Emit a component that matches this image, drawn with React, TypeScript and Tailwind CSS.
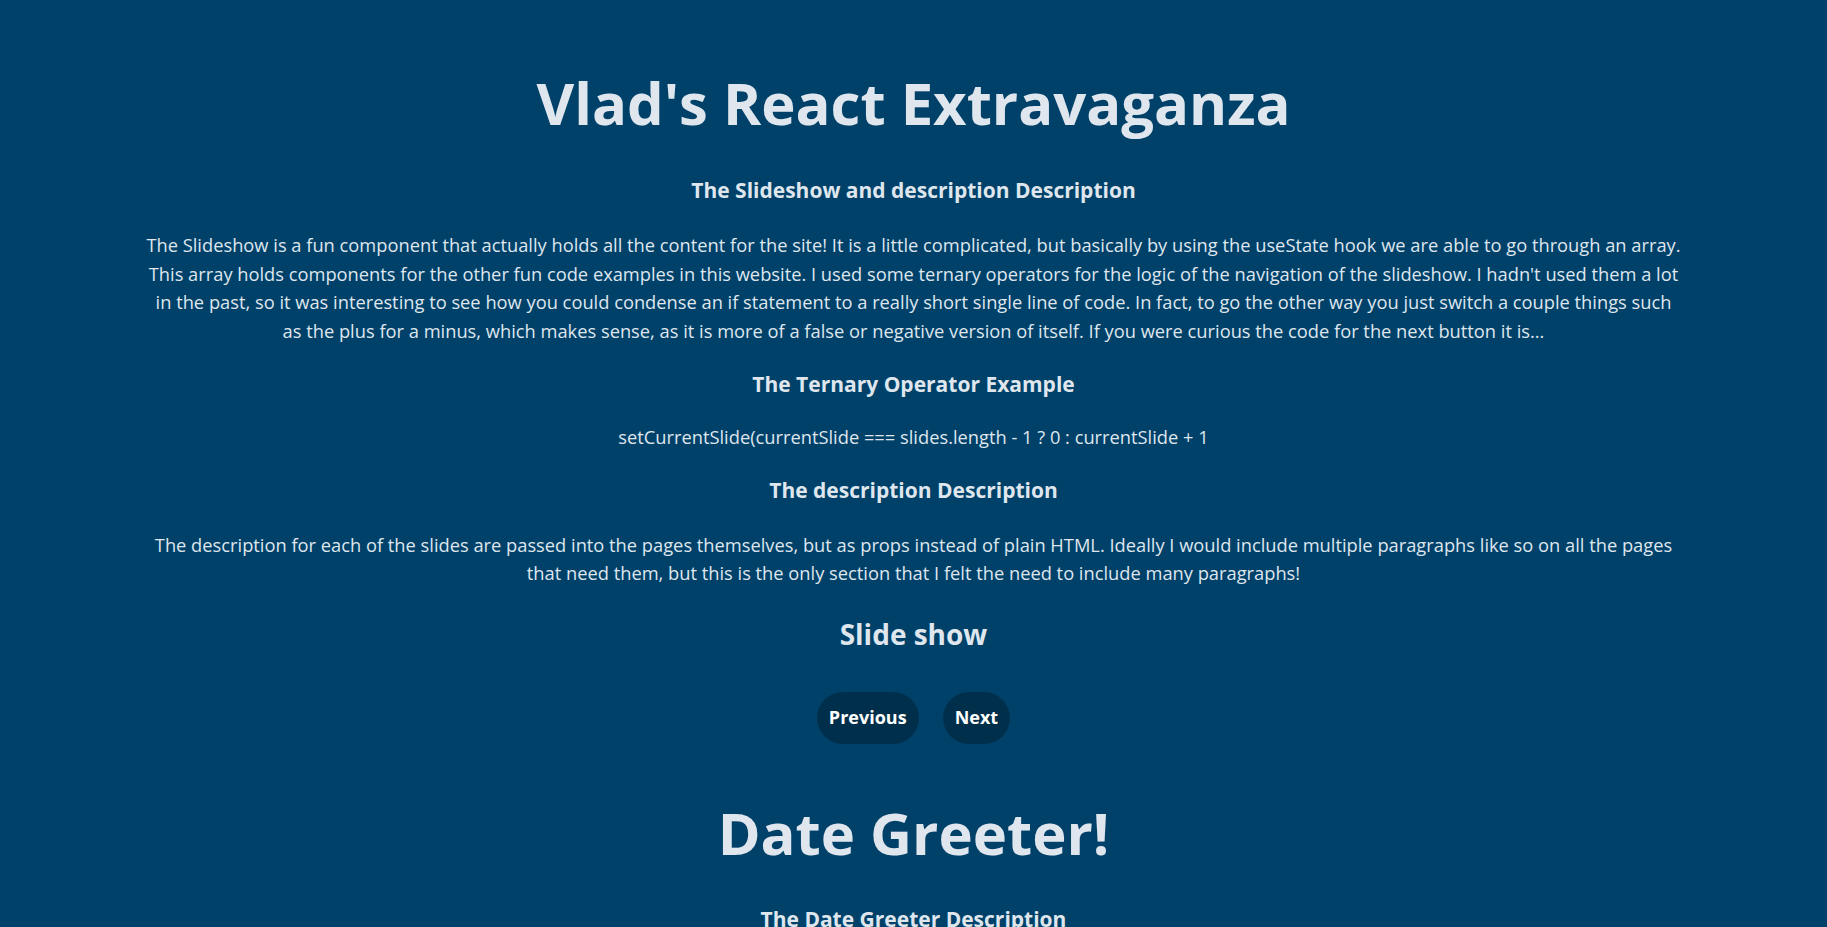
import { useState } from "react";

const FONT = "font-['Open_Sans','Liberation_Sans',sans-serif]";

export default function App() {
  const [slide, setSlide] = useState(0);

  return (
    <div className={`min-h-screen bg-[#00416a] text-[#dfe6ed] text-center ${FONT}`}>
      <div className="px-[144px] pt-[68px]">
        <h1 className="text-[58px] leading-[70px] font-bold">Vlad's React Extravaganza</h1>

        <h3 className="mt-[38px] text-[21px] leading-[28px] font-bold">The Slideshow and description Description</h3>
        <p className="mt-[27px] text-[18.3px] leading-[28.7px]">
          The Slideshow is a fun component that actually holds all the content for the site! It is a little complicated, but basically by using the useState hook we are able to go through an array. This array holds components for the other fun code examples in this website. I used some ternary operators for the logic of the navigation of the slideshow. I hadn't used them a lot in the past, so it was interesting to see how you could condense an if statement to a really short single line of code. In fact, to go the other way you just switch a couple things such as the plus for a minus, which makes sense, as it is more of a false or negative version of itself. If you were curious the code for the next button it is...
        </p>

        <h3 className="mt-[24px] text-[21px] leading-[28px] font-bold">The Ternary Operator Example</h3>
        <p className="mt-[25px] text-[18.3px] leading-[28.7px]">
          setCurrentSlide(currentSlide === slides.length - 1 ? 0 : currentSlide + 1
        </p>

        <h3 className="mt-[24px] text-[21px] leading-[28px] font-bold">The description Description</h3>
        <p className="mt-[27px] text-[18.3px] leading-[28.7px]">
          The description for each of the slides are passed into the pages themselves, but as props instead of plain HTML. Ideally I would include multiple paragraphs like so on all the pages that need them, but this is the only section that I felt the need to include many paragraphs!
        </p>

        <h2 className="mt-[26px] text-[28px] leading-[40px] font-bold">Slide show</h2>

        <div className="mt-[38px] flex justify-center gap-[24px]">
          <button
            onClick={() => setSlide(slide === 0 ? 1 : slide - 1)}
            className="h-[52px] px-[12px] rounded-full bg-[#002f4b] text-white text-[18px] font-bold"
          >
            Previous
          </button>
          <button
            onClick={() => setSlide(slide === 1 ? 0 : slide + 1)}
            className="h-[52px] px-[12px] rounded-full bg-[#002f4b] text-white text-[18px] font-bold"
          >
            Next
          </button>
        </div>

        <h1 className="mt-[54px] text-[58px] leading-[70px] font-bold">Date Greeter!</h1>
        <h3 className="mt-[37px] text-[21px] leading-[28px] font-bold">The Date Greeter Description</h3>
      </div>
    </div>
  );
}
